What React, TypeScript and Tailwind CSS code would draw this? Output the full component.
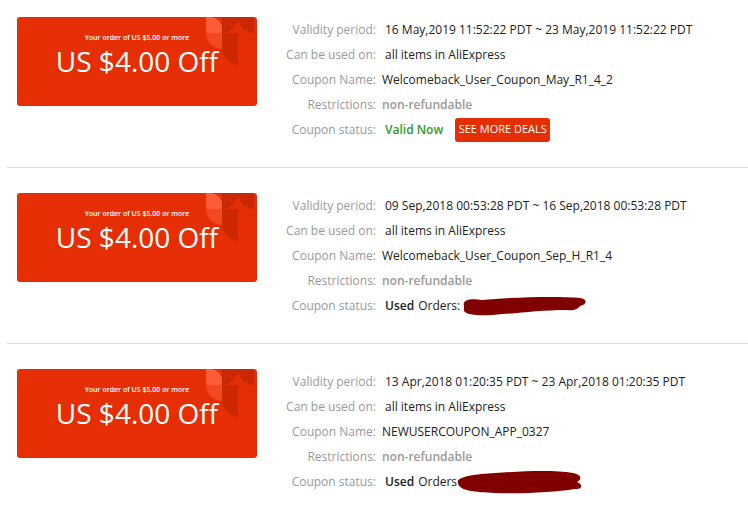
import type { ReactNode } from "react";

type Coupon = {
  validity: string;
  name: string;
  status: "valid" | "used1" | "used2";
};

const coupons: Coupon[] = [
  {
    validity: "16 May,2019 11:52:22 PDT ~ 23 May,2019 11:52:22 PDT",
    name: "Welcomeback_User_Coupon_May_R1_4_2",
    status: "valid",
  },
  {
    validity: "09 Sep,2018 00:53:28 PDT ~ 16 Sep,2018 00:53:28 PDT",
    name: "Welcomeback_User_Coupon_Sep_H_R1_4",
    status: "used1",
  },
  {
    validity: "13 Apr,2018 01:20:35 PDT ~ 23 Apr,2018 01:20:35 PDT",
    name: "NEWUSERCOUPON_APP_0327",
    status: "used2",
  },
];

// decorative shapes in the coupon's top-right corner
const CornerArt = () => (
  <svg width="48" height="50" viewBox="0 0 48 50" className="absolute right-[3px] top-0">
    <path d="M0 0 H4 A12 12 0 0 1 16 12 V16 H0 Z" fill="#ff5b39" />
    <path d="M0 16 H16 V32 A16 16 0 0 1 0 16 Z" fill="#f3471f" />
    <path d="M16 0 H32 A16 16 0 0 1 16 16 Z" fill="#c92803" />
    <path d="M32 0 H48 V16 A16 16 0 0 1 32 0 Z" fill="#c92803" />
    <path d="M16 16 A16 16 0 0 0 32 32 V16 Z" fill="#d62b04" />
    <path d="M16 16 H32 V48 A18 18 0 0 1 16 30 Z" fill="#cc2903" />
  </svg>
);

const CouponCard = () => (
  <div className="relative w-[240px] h-[89px] shrink-0 rounded-[3px] bg-[#e62e04] overflow-hidden flex flex-col items-center text-white">
    <CornerArt />
    <div className="relative mt-[16px] text-[7px] font-semibold leading-[10px]">Your order of US $5.00 or more</div>
    <div className="relative mt-[1px] text-[28px] leading-[34px]">US $4.00 Off</div>
  </div>
);

const Row = ({ label, children, gap = "ml-[9px]" }: { label: string; children: ReactNode; gap?: string }) => (
  <div className="h-[25px] flex items-center whitespace-nowrap">
    <div className="w-[106px] text-right text-[#999]">{label}</div>
    <div className={`${gap} flex items-center text-[#222]`}>{children}</div>
  </div>
);

// redaction marks drawn over the order numbers
const Scribble = ({ variant }: { variant: number }) =>
  variant === 1 ? (
    <svg width="126" height="21" viewBox="0 0 126 21" className="ml-[2px] mt-[1px]">
      <path
        d="M2 10 C0 4 8 2 20 4 C50 1 100 0 118 2 C126 3 125 9 118 10 C116 13 112 15 105 14 C80 14 60 17 40 18 C25 20 5 20 2 15 Z"
        fill="#800000"
      />
    </svg>
  ) : (
    <svg width="130" height="26" viewBox="0 0 130 26" className="-ml-[2px] mt-[2px]">
      <path
        d="M3 13 C0 7 20 4 40 3 C70 1 100 0 118 3 C128 5 126 10 122 12 C128 14 128 20 120 19 C100 22 70 24 40 23 C20 22 4 21 3 13 Z"
        fill="#800000"
      />
    </svg>
  );

const CouponItem = ({ coupon, first }: { coupon: Coupon; first: boolean }) => (
  <div className={`ml-[7px] pl-[10px] flex ${first ? "pt-[17px]" : "pt-[25px]"} pb-[25px] border-b border-[#ddd]`}>
    <CouponCard />
    <div className="ml-[13px]">
      <Row label="Validity period:">{coupon.validity}</Row>
      <Row label="Can be used on:">all items in AliExpress</Row>
      <Row label="Coupon Name:" gap="ml-[6px]">
        {coupon.name}
      </Row>
      <Row label="Restrictions:" gap="ml-[6px]">
        <span className="font-semibold text-[#999]">non-refundable</span>
      </Row>
      <Row label="Coupon status:">
        {coupon.status === "valid" ? (
          <>
            <span className="font-semibold text-[#2f9a1f]">Valid Now</span>
            <button className="ml-[12px] w-[95px] h-[24px] rounded-[3px] bg-[#e62e04] text-white text-[11px]">
              SEE MORE DEALS
            </button>
          </>
        ) : (
          <>
            <span className="font-semibold">Used</span>
            <span className="ml-[4px]">{coupon.status === "used1" ? "Orders: " : "Orders"}</span>
            <Scribble variant={coupon.status === "used1" ? 1 : 2} />
          </>
        )}
      </Row>
    </div>
  </div>
);

export default function App() {
  return (
    <div className="w-[748px] h-[519px] overflow-hidden bg-white font-['Open_Sans',sans-serif] text-[12px]">
      {coupons.map((c, i) => (
        <CouponItem key={i} coupon={c} first={i === 0} />
      ))}
    </div>
  );
}
